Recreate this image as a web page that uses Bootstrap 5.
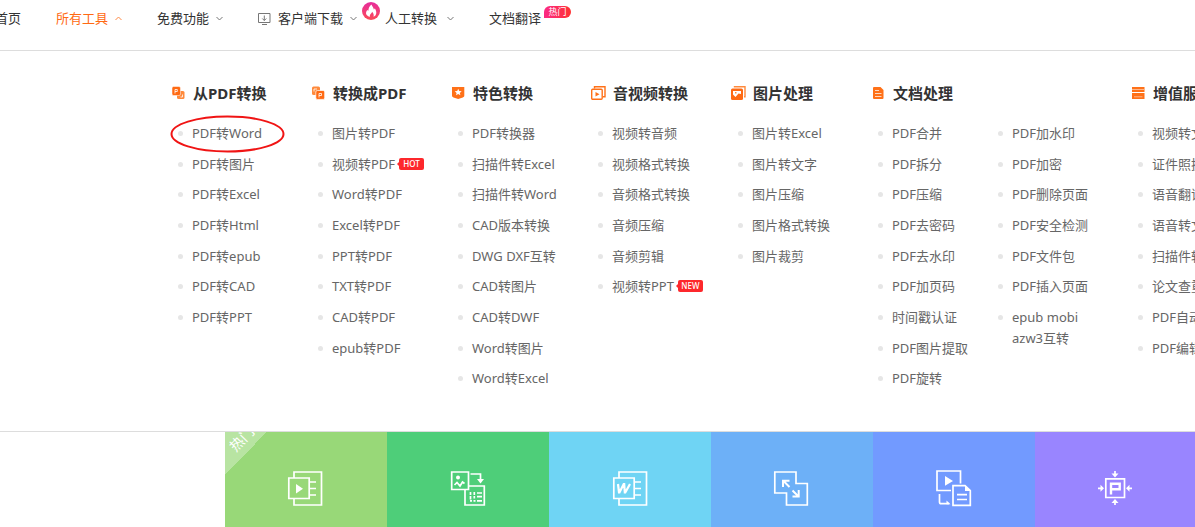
<!DOCTYPE html>
<html lang="zh-CN">
<head>
<meta charset="utf-8">
<meta name="viewport" content="width=device-width, initial-scale=1">
<title>PDF转换工具</title>
<link rel="stylesheet" href="https://cdn.jsdelivr.net/npm/bootstrap@5.3.0/dist/css/bootstrap.min.css">
<style>
  body { font: 13px/21px "Noto Sans", "Noto Sans CJK SC", sans-serif; color: #333; background: #fff; overflow-x: hidden; }
  a { color: inherit; text-decoration: none; white-space: nowrap; }
  svg { flex: none; overflow: visible; }

  .site-header { height: 51px; padding-top: 8px; border-bottom: 1px solid #ddd; }
  .main-menu { gap: 35px; margin-left: -5px; }
  .main-menu a { display: flex; align-items: center; gap: 7px; }
  .main-menu .roomy { gap: 10px; }
  .main-menu .flamed { margin-right: -7px; }
  .main-menu .current { color: #ff6a13; }
  .chev { width: 7px; height: 5px; fill: none; stroke: #777; stroke-width: 1; }
  .current .chev { stroke: #ff8a45; }
  .flame { left: 100%; top: -6px; margin-left: 5px; }
  .hot-pill { left: 100%; top: -2px; margin-left: 3px; width: 27px; height: 12px; font-size: 9px; line-height: 12px; color: #fff; text-align: center; background: linear-gradient(90deg, #fb2a86, #ff3131); border-radius: 6px 6px 6px 0; }

  .mega { padding: 31px 0 37px 172px; border-bottom: 1px solid #ddd; overflow: hidden; }
  .tool-group { flex: none; width: 140px; }
  .tool-group.wide { width: 260px; }
  .tool-group h2 { display: flex; align-items: center; gap: 7px; margin: 0 0 14px; font-size: 15px; line-height: 22px; font-weight: 700; white-space: nowrap; }
  .tool-list { display: grid; grid-template-rows: repeat(9, minmax(0, 1fr)); width: 120px; height: 276px; margin: 0; padding: 0 0 0 6px; list-style: none; color: #666; }
  .tool-list li { position: relative; display: flex; align-items: flex-start; padding-top: 5px; }
  .tool-list li::before { content: ""; flex: none; width: 5px; height: 5px; margin: 8px 9px 0 0; border-radius: 50%; background: #e6e6e6; }
  .tool-list .wraps { white-space: normal; }
  .flag { position: relative; flex: none; height: 12px; width: 25px; margin: 4px 0 0 4px; font: 500 8px/12px "Noto Sans", sans-serif; color: #fff; text-align: center; background: #fd282c; border-radius: 2px; }
  .flag::before { content: ""; position: absolute; left: -2px; top: 4px; border: 2px solid transparent; border-left: 0; border-right-color: #fd282c; }
  .ring { position: absolute; left: -8px; top: -3px; pointer-events: none; }

  .tiles { padding-left: 225px; overflow: hidden; }
  .tile { position: relative; flex: none; width: 162px; min-height: 95px; padding-top: 39px; text-align: center; overflow: hidden; }
  .tile svg { display: block; margin: 0 auto; width: 36px; height: 36px; fill: none; stroke: #fff; stroke-width: 1.7; }
  .tile .solid { fill: #fff; stroke: none; }
  .t1 { background: #98d878; } .t2 { background: #4ece79; } .t3 { background: #6fd4f4; }
  .t4 { background: #6db0f7; } .t5 { background: #729aff; } .t6 { background: #9985ff; }
  .ribbon { position: absolute; left: 0; top: 0; width: 42px; height: 42px; background: linear-gradient(135deg, #b8e4a2 50%, transparent 50%); }
  .ribbon span { position: absolute; left: 0; top: -3px; width: 34px; line-height: 20px; font-size: 14px; color: #fff; transform: rotate(-46deg); }
</style>
</head>
<body class="d-flex flex-column min-vh-100">
<header class="site-header">
  <nav aria-label="主导航">
    <ul class="main-menu list-unstyled d-flex mb-0">
      <li><a href="#">首页</a></li>
      <li><a href="#" class="current">所有工具 <svg class="chev" viewBox="0 0 7 5"><path d="M.5 4 3.5 1l3 3"/></svg></a></li>
      <li><a href="#">免费功能 <svg class="chev" viewBox="0 0 7 5"><path d="M.5 1l3 3 3-3"/></svg></a></li>
      <li class="position-relative flamed"><a href="#"><svg width="13" height="12" viewBox="0 0 13 12" fill="none" stroke="#777"><path d="M.5 .5h11.500v9H.5zM4 11.500h5M6.300 2.500v5M4.300 5.500l2 2 2-2"/></svg>客户端下载 <svg class="chev" viewBox="0 0 7 5"><path d="M.5 1l3 3 3-3"/></svg></a>
        <svg class="flame position-absolute" width="18" height="18" viewBox="0 0 18 18"><defs><linearGradient id="fl" x1="0" y1="0" x2="0" y2="1"><stop stop-color="#e62c9d"/><stop offset="1" stop-color="#fb4a56"/></linearGradient></defs><circle cx="9" cy="9" r="9" fill="url(#fl)"/><path fill="#fff" d="M9.500 2.500c.5 2 2.300 3.200 2.300 5 .6-.2.900-.6 1-1.300 2.700 4 1.400 7.600-1.300 8.600.5-1.700.2-3.200-1.400-5-.3 1.200-.8 1.500-1.500 2.200-.8.800-.9 1.800-.5 2.800C4 14 2.800 10.800 5.400 8c.3.500.6.700 1 .8C6.300 6.300 7.500 4 9.500 2.500z"/></svg></li>
      <li><a href="#" class="roomy">人工转换 <svg class="chev" viewBox="0 0 7 5"><path d="M.5 1l3 3 3-3"/></svg></a></li>
      <li class="position-relative"><a href="#">文档翻译</a><span class="hot-pill position-absolute">热门</span></li>
    </ul>
  </nav>
</header>

<section class="mega d-flex">
  <div class="tool-group">
    <h2><svg width="14" height="14" viewBox="0 0 14 14"><rect x="5" y="5" width="7.500" height="8" rx="1.500" fill="#ff8a3c"/><rect x="0" y="0.500" width="8.500" height="9" rx="1.500" fill="#ff6a13" stroke="#fff" stroke-width=".5"/><path d="M3 7.500V3.500h2.300v2H3" fill="none" stroke="#fff" stroke-width=".8"/><path d="M8.500 11h2V8.500" fill="none" stroke="#fff" stroke-width=".8"/></svg>从PDF转换</h2>
    <ul class="tool-list">
      <li><a href="#">PDF转Word</a><svg class="ring" width="116" height="38" viewBox="0 0 116 38"><ellipse cx="57.500" cy="19" rx="56" ry="17.500" fill="none" stroke="#f01414" stroke-width="2"/></svg></li>
      <li><a href="#">PDF转图片</a></li>
      <li><a href="#">PDF转Excel</a></li>
      <li><a href="#">PDF转Html</a></li>
      <li><a href="#">PDF转epub</a></li>
      <li><a href="#">PDF转CAD</a></li>
      <li><a href="#">PDF转PPT</a></li>
    </ul>
  </div>
  <div class="tool-group">
    <h2><svg width="14" height="14" viewBox="0 0 14 14"><rect x="0" y=".5" width="8" height="8.500" rx="1.500" fill="#ff8a3c"/><path d="M2 5.500V3h3" fill="none" stroke="#fff" stroke-width=".8"/><rect x="3.800" y="4.500" width="8.900" height="8.900" rx="1.500" fill="#ff6a13" stroke="#fff" stroke-width=".7"/><path d="M7 11.500V7.500h2.500v2H7" fill="none" stroke="#fff" stroke-width=".8"/></svg>转换成PDF</h2>
    <ul class="tool-list">
      <li><a href="#">图片转PDF</a></li>
      <li><a href="#">视频转PDF</a><span class="flag">HOT</span></li>
      <li><a href="#">Word转PDF</a></li>
      <li><a href="#">Excel转PDF</a></li>
      <li><a href="#">PPT转PDF</a></li>
      <li><a href="#">TXT转PDF</a></li>
      <li><a href="#">CAD转PDF</a></li>
      <li><a href="#">epub转PDF</a></li>
    </ul>
  </div>
  <div class="tool-group">
    <h2><svg width="14" height="14" viewBox="0 0 14 14"><path d="M0 1h12.300v8.500c0 1-.5 1.500-1.500 2L6.200 13l-4.700-1.500C.5 11 0 10.500 0 9.500z" fill="#ff7118"/><path d="M6.200 2.800l1 2.300 2.500.2-1.900 1.600.6 2.400-2.200-1.300L4 9.300l.6-2.400-1.900-1.600 2.500-.2z" fill="#fff"/></svg>特色转换</h2>
    <ul class="tool-list">
      <li><a href="#">PDF转换器</a></li>
      <li><a href="#">扫描件转Excel</a></li>
      <li><a href="#">扫描件转Word</a></li>
      <li><a href="#">CAD版本转换</a></li>
      <li><a href="#">DWG DXF互转</a></li>
      <li><a href="#">CAD转图片</a></li>
      <li><a href="#">CAD转DWF</a></li>
      <li><a href="#">Word转图片</a></li>
      <li><a href="#">Word转Excel</a></li>
    </ul>
  </div>
  <div class="tool-group">
    <h2><svg width="14" height="14" viewBox="1 0 14 14" fill="none" stroke="#ff7118" stroke-width="1.400"><path d="M3.500 2.500V.7h10.500v10h-2"/><rect x=".7" y="3.200" width="10.500" height="10" rx="1"/><path d="M4.500 6v4.600L8.500 8.300z" fill="#ff7118" stroke="none"/></svg>音视频转换</h2>
    <ul class="tool-list">
      <li><a href="#">视频转音频</a></li>
      <li><a href="#">视频格式转换</a></li>
      <li><a href="#">音频格式转换</a></li>
      <li><a href="#">音频压缩</a></li>
      <li><a href="#">音频剪辑</a></li>
      <li><a href="#">视频转PPT</a><span class="flag">NEW</span></li>
    </ul>
  </div>
  <div class="tool-group">
    <h2><svg width="14" height="14" viewBox="1 0 14 14"><path d="M3.500 1.500V.7H14v10h-1" fill="none" stroke="#ff8a3c" stroke-width="1.400"/><rect x="0" y="2.500" width="12" height="11.500" rx="1.500" fill="#ff6a13"/><path d="M2 5h8v3L7.500 7.500 4.500 11 2 8.500z" fill="#fff"/><path d="M4 6h1.500v1.500H4z" fill="#ff8a3c"/></svg>图片处理</h2>
    <ul class="tool-list">
      <li><a href="#">图片转Excel</a></li>
      <li><a href="#">图片转文字</a></li>
      <li><a href="#">图片压缩</a></li>
      <li><a href="#">图片格式转换</a></li>
      <li><a href="#">图片裁剪</a></li>
    </ul>
  </div>
  <div class="tool-group wide">
    <h2><svg width="14" height="14" viewBox="0 0 14 14"><path d="M2 1h6.500L11.500 4v8a1 1 0 0 1-1 1H2a1 1 0 0 1-1-1V2a1 1 0 0 1 1-1z" fill="#ff7118"/><path d="M3 4.500h4M3 7.500h6.500M3 10.500h6.500" stroke="#ffd9c0"/></svg>文档处理</h2>
    <div class="d-flex">
      <ul class="tool-list">
        <li><a href="#">PDF合并</a></li>
        <li><a href="#">PDF拆分</a></li>
        <li><a href="#">PDF压缩</a></li>
        <li><a href="#">PDF去密码</a></li>
        <li><a href="#">PDF去水印</a></li>
        <li><a href="#">PDF加页码</a></li>
        <li><a href="#">时间戳认证</a></li>
        <li><a href="#">PDF图片提取</a></li>
        <li><a href="#">PDF旋转</a></li>
      </ul>
      <ul class="tool-list">
        <li><a href="#">PDF加水印</a></li>
        <li><a href="#">PDF加密</a></li>
        <li><a href="#">PDF删除页面</a></li>
        <li><a href="#">PDF安全检测</a></li>
        <li><a href="#">PDF文件包</a></li>
        <li><a href="#">PDF插入页面</a></li>
        <li><a href="#" class="wraps">epub mobi azw3互转</a></li>
      </ul>
    </div>
  </div>
  <div class="tool-group">
    <h2><svg width="14" height="14" viewBox="0 0 14 14"><path d="M0 1h12.500v5H0zM0 7h12.500v6H0z" fill="#ff7118"/><path d="M0 3.500h12.500M2 10.800h8.500" stroke="#ffb68a"/></svg>增值服务</h2>
    <ul class="tool-list">
      <li><a href="#">视频转文字</a></li>
      <li><a href="#">证件照换底</a></li>
      <li><a href="#">语音翻译</a></li>
      <li><a href="#">语音转文字</a></li>
      <li><a href="#">扫描件转换</a></li>
      <li><a href="#">论文查重</a></li>
      <li><a href="#">PDF自动化</a></li>
      <li><a href="#">PDF编辑器</a></li>
    </ul>
  </div>
</section>

<main class="tiles d-flex flex-grow-1">
  <a href="#" class="tile t1" aria-label="PDF转视频"><span class="ribbon"><span>热门</span></span>
    <svg viewBox="0 0 36 36"><path d="M6 7V1h27.500v33H6v-6M.8 7h20.400v20.500H.8zM22 11h6M22 17.500h6M22 24h6"/><path class="solid" d="M8 13v9.500l7-4.700z"/></svg></a>
  <a href="#" class="tile t2" aria-label="图片转换">
    <svg viewBox="0 0 36 36"><path d="M1.700 1h16.800v17.500H1.700zM19 15h15.300v19H15V19M20.500 3h10v6"/><path class="solid" d="M27 8h7l-3.500 4.500z"/><circle class="solid" cx="8" cy="6.500" r="2"/><path d="M4.500 14l2.500-2.500 3 3.500L12.500 11l2 1.500"/><path d="M20.500 21v3M20.500 25v3.500M20 29.800h2M24.300 21v3M24.300 25v2.500M23.500 29.800h2M27 22h5M27 25.700h5M27 29.800h5"/></svg></a>
  <a href="#" class="tile t3" aria-label="PDF转Word">
    <svg viewBox="-1 0 36 36"><path d="M6 7V1h27.500v33H6v-6M.8 7h20.400v20.500H.8zM22 11h6M22 17.500h6M22 24h6"/><path d="M5 13l1 8.500h.5L10.700 13h.5l.6 8.500h.5L17 13" stroke-width="2.200"/></svg></a>
  <a href="#" class="tile t4" aria-label="PDF压缩">
    <svg viewBox="0 0 36 36"><path d="M.8 1H22v11.500h11.300V34H12.500V22H.8z"/><path stroke-width="2" d="M9 16V9.700h6.500M9.500 10l6 6M18.500 25.500h6.200V19M18.500 19.500l6 6"/></svg></a>
  <a href="#" class="tile t5" aria-label="视频转换">
    <svg viewBox="0 0 36 36"><path d="M15 19.500H1V0h23.500v12.500M17 14.700h12l5.300 5V34.300H17zM21 23.700h10M21 28.500h10M3.500 23v8q0 1.700 1.700 1.700h8"/><path class="solid" d="M9 5v9.800l8-4.900zM29 14.500l6 5.500h-6zM10.500 29.500l4 3.800h-4z"/></svg></a>
  <a href="#" class="tile t6" aria-label="PDF瘦身">
    <svg viewBox="0 0 36 36"><path d="M7.800 7.800h18.700v18.700H7.800zM17 0v4M17 34v-4M0 17.300h4M34 17.300h-4"/><path d="M13 23.500V12.800h8.700v5.400H13" stroke-width="2.400"/><path class="solid" d="M13.500 2.500h7L17 6.500zM13.500 32h7L17 28zM2.500 13.800v7l3.500-3.500zM31.500 13.800v7L28 17.300z"/></svg></a>
</main>
<script src="https://cdn.jsdelivr.net/npm/bootstrap@5.3.0/dist/js/bootstrap.bundle.min.js"></script>
</body>
</html>
